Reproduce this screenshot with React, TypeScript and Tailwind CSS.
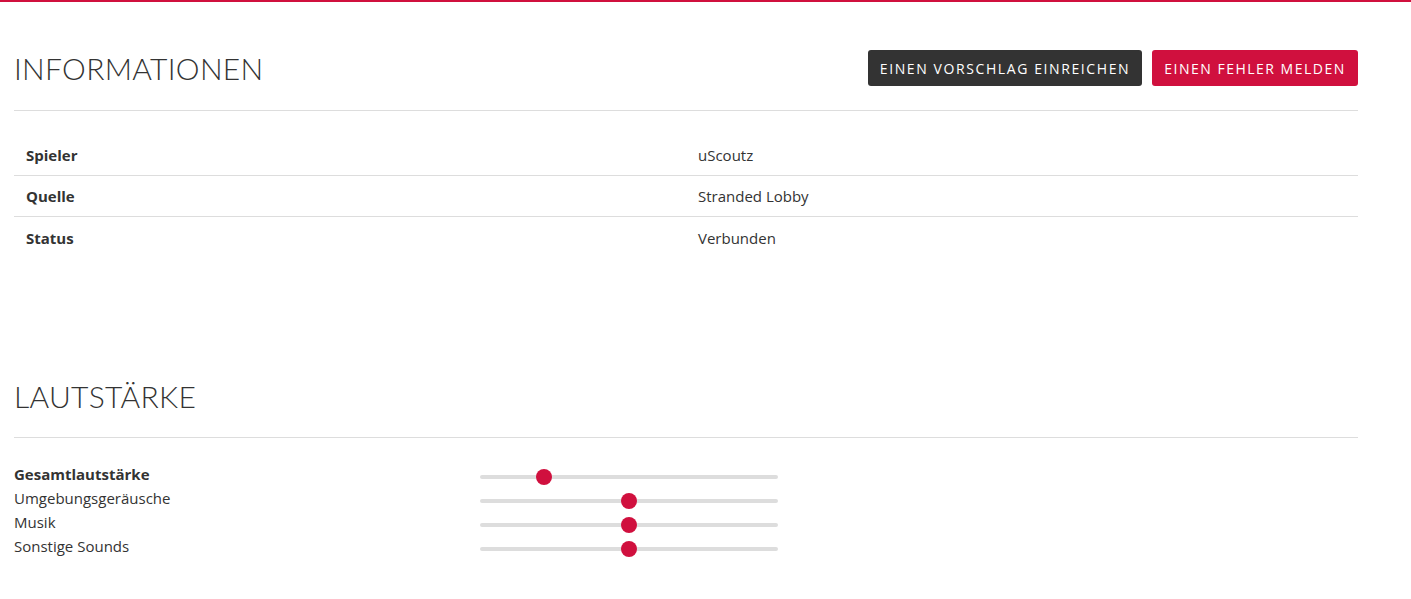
import React from "react";

const info = [
  { label: "Spieler", value: "uScoutz" },
  { label: "Quelle", value: "Stranded Lobby" },
  { label: "Status", value: "Verbunden" },
];

const volumes = [
  { label: "Gesamtlautstärke", value: 20, bold: true },
  { label: "Umgebungsgeräusche", value: 50 },
  { label: "Musik", value: 50 },
  { label: "Sonstige Sounds", value: 50 },
];

const Slider: React.FC<{ value: number }> = ({ value }) => (
  <div className="relative h-6 w-[298px]">
    <div className="absolute left-0 right-0 top-[13px] h-[4px] rounded-full bg-[#dddddd]" />
    <div className="absolute top-[7px] left-[8px] right-[8px]">
      <div
        className="absolute h-4 w-4 -translate-x-1/2 rounded-full bg-[#d0103e]"
        style={{ left: `${value}%` }}
      />
    </div>
  </div>
);

const SectionTitle: React.FC<{ children: React.ReactNode }> = ({ children }) => (
  <h2 className="font-['Lato',sans-serif] text-[30px] font-light leading-none tracking-[0.3px] text-[#333]">
    {children}
  </h2>
);

export default function App() {
  return (
    <div className="min-h-[599px] bg-white font-['Open_Sans',sans-serif] text-[#333]">
      <div className="h-[2px] bg-[#d0103e]" />
      <div className="w-[1344px] ml-[14px]">
        <div className="flex items-center justify-between pt-[48px] pb-[24px] border-b border-[#dddddd]">
          <SectionTitle>INFORMATIONEN</SectionTitle>
          <div className="flex gap-[10px]">
            <button className="h-9 w-[274px] rounded-[3px] bg-[#333333] text-[14px] tracking-[1.6px] text-white">
              EINEN VORSCHLAG EINREICHEN
            </button>
            <button className="h-9 w-[206px] rounded-[3px] bg-[#d0103e] text-[14px] tracking-[1.5px] text-white">
              EINEN FEHLER MELDEN
            </button>
          </div>
        </div>

        <table className="mt-[23px] w-full text-[15px]">
          <tbody>
            {info.map((row, i) => (
              <tr key={row.label} className={i < info.length - 1 ? "border-b border-[#dddddd]" : ""}>
                <td className="w-1/2 px-3 h-[41px] pt-[2px] font-bold">{row.label}</td>
                <td className="w-1/2 px-3 h-[41px] pt-[2px]">{row.value}</td>
              </tr>
            ))}
          </tbody>
        </table>

        <div className="mt-[124px] pb-[26px] border-b border-[#dddddd]">
          <SectionTitle>LAUTSTÄRKE</SectionTitle>
        </div>

        <div className="mt-[24px] flex flex-col">
          {volumes.map((v) => (
            <div key={v.label} className="flex h-6 items-center">
              <div className={`w-[466px] text-[15px] ${v.bold ? "font-bold" : ""}`}>{v.label}</div>
              <Slider value={v.value} />
            </div>
          ))}
        </div>
      </div>
    </div>
  );
}
